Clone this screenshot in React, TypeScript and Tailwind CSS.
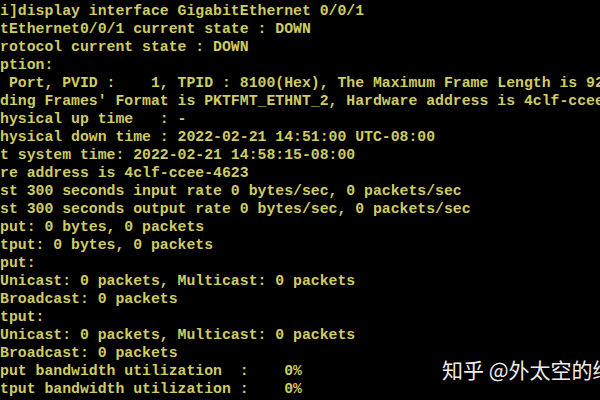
import React from "react";

const lines = [
  "i]display interface GigabitEthernet 0/0/1",
  "tEthernet0/0/1 current state : DOWN",
  "rotocol current state : DOWN",
  "ption:",
  " Port, PVID :    1, TPID : 8100(Hex), The Maximum Frame Length is 9216",
  "ding Frames' Format is PKTFMT_ETHNT_2, Hardware address is 4clf-ccee-4623",
  "hysical up time   : -",
  "hysical down time : 2022-02-21 14:51:00 UTC-08:00",
  "t system time: 2022-02-21 14:58:15-08:00",
  "re address is 4clf-ccee-4623",
  "st 300 seconds input rate 0 bytes/sec, 0 packets/sec",
  "st 300 seconds output rate 0 bytes/sec, 0 packets/sec",
  "put: 0 bytes, 0 packets",
  "tput: 0 bytes, 0 packets",
  "put:",
  "Unicast: 0 packets, Multicast: 0 packets",
  "Broadcast: 0 packets",
  "tput:",
  "Unicast: 0 packets, Multicast: 0 packets",
  "Broadcast: 0 packets",
  "put bandwidth utilization  :    0%",
  "tput bandwidth utilization :    0%",
];

export default function App() {
  return (
    <div className="relative w-[600px] h-[400px] bg-black overflow-hidden">
      <pre className="pt-[2px] font-['Liberation_Mono',monospace] font-bold text-[14.8px] leading-[18px] text-[#cfcc62] whitespace-pre">
        {lines.map((line, i) => (
          <div key={i}>{line}</div>
        ))}
      </pre>
      <div className="absolute left-[442px] top-[355px] whitespace-nowrap font-['Noto_Sans_CJK_SC',sans-serif] text-[21px] leading-[28px] text-[#ececec]">
        知乎 @外太空的绿
      </div>
    </div>
  );
}
